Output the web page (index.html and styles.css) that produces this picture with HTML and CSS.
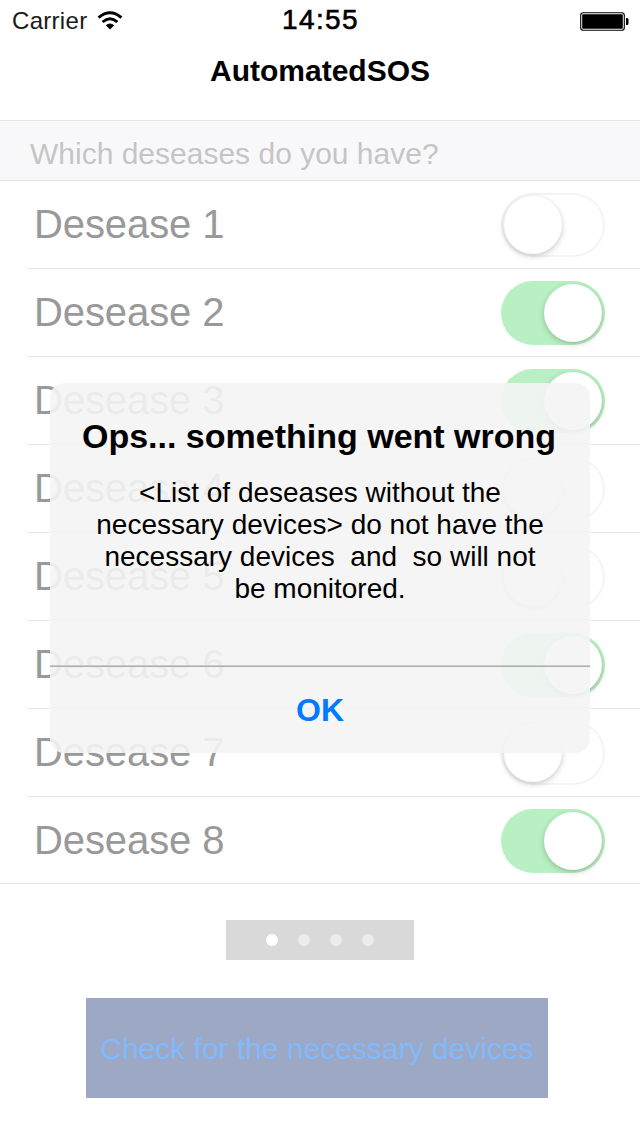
FILE: index.html
```
<!DOCTYPE html>
<html lang="en">
<head>
<meta charset="utf-8">
<title>AutomatedSOS</title>
<link rel="stylesheet" href="styles.css">
</head>
<body>
<div class="screen">
  <header class="status">
    <div class="status-left">
      <span class="carrier">Carrier</span>
      <svg class="wifi" width="26" height="20" viewBox="0 0 26 20" fill="none" stroke="#000">
        <path d="M1.600 6.600Q13 -3 24.400 6.600" stroke-width="3"/>
        <path d="M5.600 11Q13 4.400 20.400 11" stroke-width="2.800"/>
        <path d="M8.800 14.200Q13 11 17.200 14.200L13 18.600Z" fill="#000" stroke="none"/>
      </svg>
    </div>
    <span class="clock">14:55</span>
    <div class="status-right">
      <svg width="50" height="20" viewBox="0 0 50 20">
        <rect x=".7" y=".7" width="43.6" height="17.6" rx="2.6" fill="#fff" stroke="#000" stroke-width="1.1"/>
        <rect x="2.2" y="2.2" width="40.6" height="14.6" rx=".8" fill="#000"/>
        <path d="M46 6h1q1.500 0 1.500 1.500v4q0 1.500-1.500 1.500H46Z" fill="#000"/>
      </svg>
    </div>
  </header>
  <h1 class="title">AutomatedSOS</h1>
  <h2 class="question">Which deseases do you have?</h2>
  <ul class="list">
    <li class="row"><span>Desease 1</span><i class="toggle"></i></li>
    <li class="row"><span>Desease 2</span><i class="toggle on"></i></li>
    <li class="row"><span>Desease 3</span><i class="toggle on"></i></li>
    <li class="row"><span>Desease 4</span><i class="toggle"></i></li>
    <li class="row"><span>Desease 5</span><i class="toggle"></i></li>
    <li class="row"><span>Desease 6</span><i class="toggle on"></i></li>
    <li class="row"><span>Desease 7</span><i class="toggle"></i></li>
    <li class="row"><span>Desease 8</span><i class="toggle on"></i></li>
  </ul>
  <div class="pager"><i class="dot active"></i><i class="dot"></i><i class="dot"></i><i class="dot"></i></div>
  <button class="check">Check for the necessary devices</button>
  <div class="alert" role="alertdialog">
    <div class="alert-body">
      <h3 class="alert-title">Ops... something went wrong</h3>
      <p class="alert-text">&lt;List of deseases without the<br>necessary devices&gt; do not have the<br>necessary devices&nbsp; and&nbsp; so will not<br>be monitored.</p>
    </div>
    <button class="ok">OK</button>
  </div>
</div>
</body>
</html>
```
FILE: styles.css
```
* { box-sizing: border-box; margin: 0; padding: 0; }
body { font-family: "Liberation Sans", Arial, sans-serif; background: #fff; color: #000; }
button { font-family: inherit; border: 0; background: none; }
.screen {
  position: relative;
  width: 640px;
  height: 1136px;
  overflow: hidden;
  display: flex;
  flex-direction: column;
}
.status {
  height: 36px;
  padding: 0 10px 0 12px;
  display: grid;
  grid-template-columns: 1fr auto 1fr;
  align-items: center;
}
.status-left { display: flex; align-items: center; gap: 10px; }
.carrier { font-size: 24px; letter-spacing: .3px; line-height: 38px; color: #1a1a1a; padding-top: 2px; }
.wifi { margin-top: 1px; }
.clock { font-size: 28px; letter-spacing: 1.4px; line-height: 36px; margin-left: -1px; padding-bottom: 0; -webkit-text-stroke: .6px #000; }
.status-right { display: flex; justify-content: flex-end; padding-top: 4px; }
.title { height: 84px; font-size: 30px; line-height: 70px; text-align: center; }
.question {
  height: 61px;
  padding-left: 30px;
  border: solid #e5e5e6;
  border-width: 1px 0;
  background: #f8f8fb;
  color: #c5c5c5;
  font-size: 30px;
  font-weight: 400;
  line-height: 66px;
}
.list { list-style: none; border-bottom: 1px solid #e5e5e6; }
.row {
  height: 88px;
  margin-left: 28px;
  padding: 0 35px 0 6px;
  border-bottom: 1px solid #e5e5e6;
  display: flex;
  align-items: center;
  justify-content: space-between;
  color: #999;
  font-size: 40px;
  letter-spacing: -.1px;
}
.row:last-child { height: 86px; border-bottom: 0; padding-top: 1px; }
.toggle {
  width: 104px;
  height: 64px;
  padding: 3px;
  border-radius: 32px;
  display: flex;
  box-shadow: inset 0 0 0 2px #f4f4f4;
}
.toggle::before {
  content: "";
  width: 58px;
  height: 58px;
  border-radius: 50%;
  background: #fff;
  box-shadow: 0 2px 6px rgba(0, 0, 0, .2), 0 1px 2px rgba(0, 0, 0, .04);
}
.toggle.on { background: #b8f0c3; box-shadow: none; justify-content: flex-end; }
.pager {
  width: 188px;
  height: 40px;
  margin: 36px 0 0 226px;
  background: #d9d9d9;
  display: flex;
  align-items: center;
  justify-content: center;
  gap: 20px;
}
.dot { width: 12px; height: 12px; border-radius: 50%; background: #ececec; }
.dot.active { background: #fff; }
.check {
  width: 462px;
  height: 100px;
  margin: 38px 0 0 86px;
  background: #9da9c4;
  color: #80b9fd;
  font-size: 30px;
  white-space: nowrap;
  padding-top: 2px;
}
.alert {
  position: absolute;
  left: 50px;
  top: 382.500px;
  width: 540px;
  height: 370.500px;
  border-radius: 14px;
  background: rgba(244, 244, 244, .9);
  text-align: center;
  display: flex;
  flex-direction: column;
}
.alert-body { height: 283.500px; padding-top: 33.500px; border-bottom: 1px solid #ccc; }
.alert-title { font-size: 34px; line-height: 40px; padding-right: 2px; }
.alert-text { font-size: 28px; line-height: 32px; margin-top: 21px; }
.ok { flex: 1; border-top: 1px solid #adadad; color: #007aff; font-size: 32px; font-weight: 700; }
```
